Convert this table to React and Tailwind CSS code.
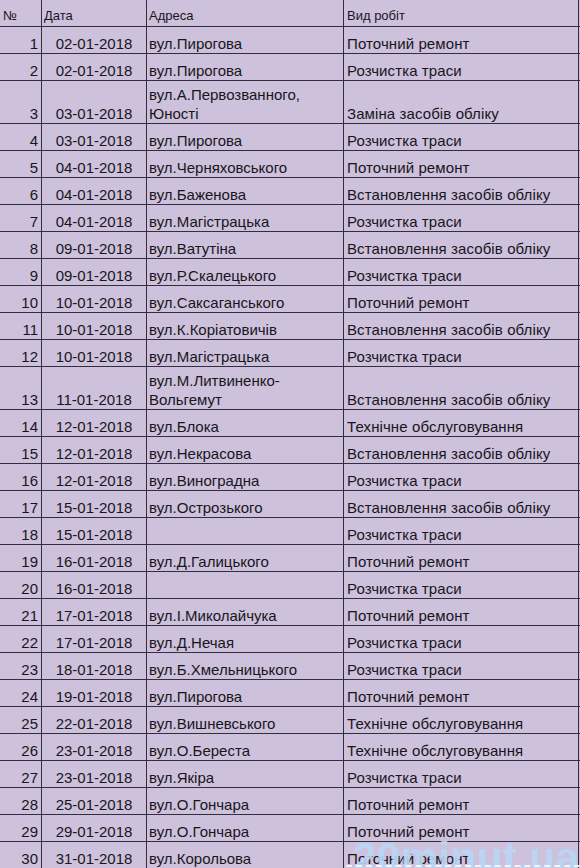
const rows = [
  [1, '02-01-2018', 'вул.Пирогова', 'Поточний ремонт'],
  [2, '02-01-2018', 'вул.Пирогова', 'Розчистка траси'],
  [3, '03-01-2018', ['вул.А.Первозванного,', 'Юності'], 'Заміна засобів обліку'],
  [4, '03-01-2018', 'вул.Пирогова', 'Розчистка траси'],
  [5, '04-01-2018', 'вул.Черняховського', 'Поточний ремонт'],
  [6, '04-01-2018', 'вул.Баженова', 'Встановлення засобів обліку'],
  [7, '04-01-2018', 'вул.Магістрацька', 'Розчистка траси'],
  [8, '09-01-2018', 'вул.Ватутіна', 'Встановлення засобів обліку'],
  [9, '09-01-2018', 'вул.Р.Скалецького', 'Розчистка траси'],
  [10, '10-01-2018', 'вул.Саксаганського', 'Поточний ремонт'],
  [11, '10-01-2018', 'вул.К.Коріатовичів', 'Встановлення засобів обліку'],
  [12, '10-01-2018', 'вул.Магістрацька', 'Розчистка траси'],
  [13, '11-01-2018', ['вул.М.Литвиненко-', 'Вольгемут'], 'Встановлення засобів обліку'],
  [14, '12-01-2018', 'вул.Блока', 'Технічне обслуговування'],
  [15, '12-01-2018', 'вул.Некрасова', 'Встановлення засобів обліку'],
  [16, '12-01-2018', 'вул.Виноградна', 'Розчистка траси'],
  [17, '15-01-2018', 'вул.Острозького', 'Встановлення засобів обліку'],
  [18, '15-01-2018', '', 'Розчистка траси'],
  [19, '16-01-2018', 'вул.Д.Галицького', 'Поточний ремонт'],
  [20, '16-01-2018', '', 'Розчистка траси'],
  [21, '17-01-2018', 'вул.І.Миколайчука', 'Поточний ремонт'],
  [22, '17-01-2018', 'вул.Д.Нечая', 'Розчистка траси'],
  [23, '18-01-2018', 'вул.Б.Хмельницького', 'Розчистка траси'],
  [24, '19-01-2018', 'вул.Пирогова', 'Поточний ремонт'],
  [25, '22-01-2018', 'вул.Вишневського', 'Технічне обслуговування'],
  [26, '23-01-2018', 'вул.О.Береста', 'Технічне обслуговування'],
  [27, '23-01-2018', 'вул.Якіра', 'Розчистка траси'],
  [28, '25-01-2018', 'вул.О.Гончара', 'Поточний ремонт'],
  [29, '29-01-2018', 'вул.О.Гончара', 'Поточний ремонт'],
  [30, '31-01-2018', 'вул.Корольова', 'Поточний ремонт'],
];

const cols = 'grid grid-cols-[42px_105px_197px_235px]';
const cell = 'flex items-end border-r border-[#332d40] leading-[19px]';

const Row = ({ num, date, address, work }) => {
  const tall = Array.isArray(address);
  return (
    <div className={`${cols} border-b border-[#332d40] ${tall ? 'h-[43px]' : 'h-[27px]'}`}>
      <div className={`${cell} justify-end pr-[3px]`}>{num}</div>
      <div className={`${cell} justify-center`}>{date}</div>
      <div className={`${cell} flex-col items-start justify-end pl-[2px]`}>
        {tall ? address.map(line => <span key={line}>{line}</span>) : <span>{address}</span>}
      </div>
      <div className={`${cell} pl-[3px] tracking-[0.1px]`}>{work}</div>
    </div>
  );
};

export default function App() {
  return (
    <div className="relative w-[580px] h-[868px] overflow-hidden bg-[#cdc1db] text-[15px] text-[#18161c]" style={{ fontFamily: '"Liberation Sans", Arial, sans-serif' }}>
      {/* Header */}
      <div className={`${cols} h-[27px] border-b border-[#332d40] text-[13px]`}>
        <div className={`${cell} pl-[3px] pb-[1px]`}>№</div>
        <div className={`${cell} pl-[2px] pb-[1px]`}>Дата</div>
        <div className={`${cell} pl-[2px] pb-[1px]`}>Адреса</div>
        <div className={`${cell} pl-[3px] pb-[1px]`}>Вид робіт</div>
      </div>

      {rows.map(([num, date, address, work]) => (
        <Row key={num} num={num} date={date} address={address} work={work} />
      ))}

      {/* watermark */}
      <div className="absolute left-[353px] top-[837px] text-[42px] font-bold leading-none text-[#bad7f6] opacity-90 tracking-[0.5px]">
        20minut.ua
      </div>
      <div className="absolute left-[346px] right-0 bottom-[1px] border-t-2 border-dashed border-white/80"></div>
    </div>
  );
}
